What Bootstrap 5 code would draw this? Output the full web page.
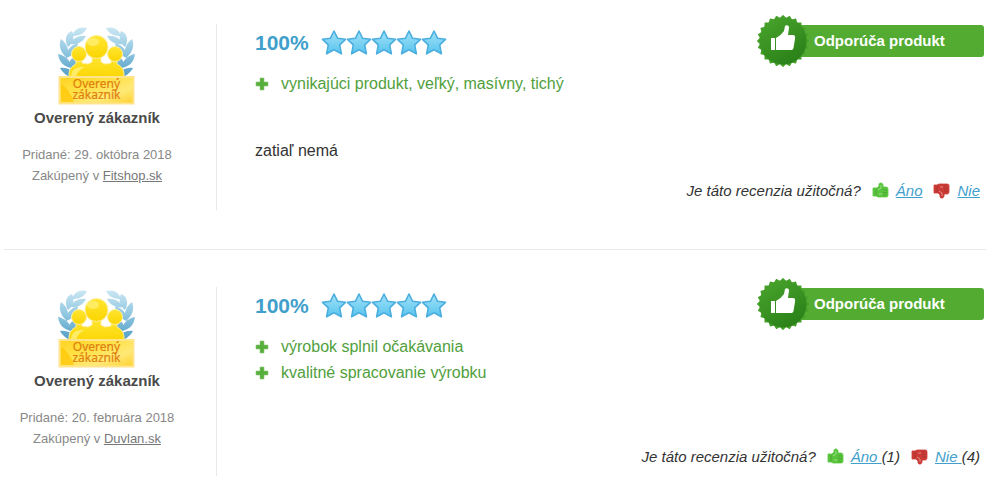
<!DOCTYPE html>
<html lang="sk">
<head>
<meta charset="utf-8">
<meta name="viewport" content="width=device-width, initial-scale=1">
<title>Recenzie</title>
<link href="https://cdn.jsdelivr.net/npm/bootstrap@5.3.0/dist/css/bootstrap.min.css" rel="stylesheet">
<style>
body { font-family: "Liberation Sans", Arial, sans-serif; font-size: 16px; line-height: 26px; color: #333; background: #fff; }
.reviews { padding: 24px 9px 0 4px; }
.review { padding-bottom: 39px; }
.review + .review { border-top: 1px solid #e9e9e9; padding-top: 37px; padding-bottom: 0; }
.author { width: 213px; min-height: 186px; padding-right: 26px; border-right: 1px solid #e9e9e9; line-height: 21px; }
.review + .review .author { min-height: 189px; }
.medal { width: 80px; height: 83px; }
.author-name { font-size: 15px; color: #4a4a4a; }
.meta { font-size: 13px; color: #888; }
.meta a { color: #777; }
.opinion { padding: 0 0 9px 38px; }
.score { height: 37px; color: #419fcb; font-size: 21px; gap: 12px; }
.stars { width: 127px; height: 28px; }
.pros { color: #519f3d; margin-top: 10px; }
.pros svg { width: 14px; height: 14px; }
.votes { font-size: 15px; line-height: 21px; padding-right: 6px; white-space: pre; }
.votes a { color: #419fcb; }
.votes svg { width: 17px; height: 17px; margin: 0 7px 0 11px; }
.votes .up { color: #59c53c; }
.votes .down { color: #cc3a35; transform: scaleY(-1); }
.recommend { width: 201px; height: 32px; margin: 1px 2px 0 0; border-radius: 3px; background: #53ac31; color: #fff; font-size: 15px; }
.seal { width: 54px; height: 54px; margin-left: -27px; }
</style>
<script src="https://cdn.jsdelivr.net/npm/bootstrap@5.3.0/dist/js/bootstrap.bundle.min.js"></script>
</head>
<body>
<svg width="0" height="0" class="position-absolute" aria-hidden="true">
  <defs>
    <linearGradient id="gold" x2="0" y2="1"><stop stop-color="#ffe633"/><stop offset="1" stop-color="#fbd500"/></linearGradient>
    <linearGradient id="plate" x2="1" y2="1"><stop stop-color="#ffd21f"/><stop offset=".35" stop-color="#ffe043"/><stop offset=".7" stop-color="#ffe976"/><stop offset="1" stop-color="#ffcf2c"/></linearGradient>
    <linearGradient id="leaf" gradientUnits="userSpaceOnUse" x1="0" y1="2" x2="0" y2="50"><stop stop-color="#c9e6f2"/><stop offset=".5" stop-color="#8fc6e0"/><stop offset="1" stop-color="#559fc6"/></linearGradient>
    <linearGradient id="sky" x2="0" y2="1"><stop stop-color="#a3e2f8"/><stop offset="1" stop-color="#58c4ee"/></linearGradient>
    <linearGradient id="sealFill" x2=".6" y2="1"><stop stop-color="#4aa52d"/><stop offset="1" stop-color="#2b8219"/></linearGradient>
    <g id="laurel" fill="url(#leaf)">
      <path d="M29 2C22 0 16 3 14 10C21 10 26 8 29 2Z"/>
      <path d="M28 10C21 9 15 12 12 18C19 19 25 16 28 10Z"/>
      <path d="M14 5C8 7 6 14 10 21C15 17 17 11 14 5Z"/>
      <path d="M3 13C0 20 3 27 9 32C12 25 9 17 3 13Z"/>
      <path d="M20 17C13 19 8 24 8 32C15 30 19 24 20 17Z"/>
      <path d="M0 28C1 36 6 41 14 42C13 35 7 29 0 28Z"/>
      <path d="M2 42C6 49 12 52 19 51C16 45 10 41 2 42Z"/>
      <path d="M17 31C11 33 10 38 13 43C18 40 20 36 17 31Z"/>
    </g>
    <symbol id="medal" viewBox="0 0 80 83">
      <use href="#laurel" transform="translate(1 2)"/>
      <use href="#laurel" transform="translate(78 2) scale(-1 1)"/>
      <g fill="url(#gold)" stroke="#fff0a0" stroke-width="1">
        <path d="M12 56V51C12 45 15 42 19 40V34H25V39L31 40L35 38V31H44V38L48 40L54 39V34H60V40C64 42 67 45 67 51V56Z"/>
        <circle cx="22" cy="30" r="7.500"/><circle cx="58" cy="30" r="7.500"/>
        <circle cx="39.500" cy="23" r="11.500"/>
      </g>
      <ellipse cx="36" cy="18" rx="6" ry="4" fill="#fff38a" opacity=".6"/>
      <path d="M14 52C15 44 20 43 28 43C23 45 20 49 19 53Z" fill="#fff38a" opacity=".7"/>
      <path d="M2.500 53H76.500V79.500H2.500Z" fill="url(#plate)" stroke="#ffe48b" stroke-width="2"/>
      <path d="M4 60C9 63 14 69 17 78H4Z" fill="#ffc400" opacity=".7"/>
      <g font-family="Noto Sans, sans-serif" font-size="12" font-weight="400" fill="#e0800f" stroke="#e0800f" stroke-width=".2" text-anchor="middle">
        <text x="39.500" y="64">Overený</text><text x="39.500" y="75">zákazník</text>
      </g>
    </symbol>
    <path id="star" d="M13 2L16.600 9.300L24.500 10.300L18.700 15.900L20.400 24.800L13 20.800L5.600 24.800L7.300 15.900L1.500 10.300L9.400 9.300Z" fill="url(#sky)" stroke="#4aaedf" stroke-width="1.600" stroke-linejoin="round"/>
    <symbol id="stars" viewBox="0 0 127 28">
      <use href="#star"/><use href="#star" x="25"/><use href="#star" x="50"/><use href="#star" x="75"/><use href="#star" x="100"/>
    </symbol>
    <symbol id="plus" viewBox="0 0 14 14"><path d="M5 1H9V5H13V9H9V13H5V9H1V5H5Z" fill="#58ae3d" stroke="#8aca76" stroke-width=".6"/></symbol>
    <rect id="cog" x="-18.500" y="-18.500" width="37" height="37" rx=".6"/>
    <symbol id="seal" viewBox="0 0 54 54">
      <g transform="translate(27 27)" fill="#45a02a">
        <use href="#cog"/><use href="#cog" transform="rotate(15)"/><use href="#cog" transform="rotate(30)"/><use href="#cog" transform="rotate(45)"/><use href="#cog" transform="rotate(60)"/><use href="#cog" transform="rotate(75)"/>
      </g>
      <circle cx="27" cy="27" r="23.500" fill="url(#sealFill)"/>
      <path d="M15 24H19V36H15ZM20 24L24.500 21L28 17L29 12C30 10.500 33 11 33 13.500L32 21H37C39 21 39.500 23 39 25L37.500 34C37 35.500 36.500 36 35 36H20Z" fill="#fff"/>
    </symbol>
    <symbol id="thumb" viewBox="0 0 17 17">
      <path d="M1 6H5L7 4V2C8 0 11 1 11 3V5H14C16 5 16 7 16 8V13C16 15 15 15 13 15H6L4 14H1Z" fill="currentColor" stroke="currentColor" stroke-width=".8"/>
      <path d="M4 7V13M11 8H15M11 10.500H15M11 13H14" stroke="#222" stroke-opacity=".2" fill="none"/>
      <path d="M6 8L9 6V3M7 12H10" stroke="#fff" stroke-opacity=".4" fill="none"/>
    </symbol>
  </defs>
</svg>
<main class="reviews">
  <article class="review d-flex">
    <div class="author flex-shrink-0 text-center">
      <svg class="medal d-block mx-auto" role="img" aria-label="Overený zákazník"><use href="#medal"/></svg>
      <div class="author-name fw-bold">Overený zákazník</div>
      <div class="meta mt-3">Pridané: 29. októbra 2018<br>Zakúpený v <a href="#">Fitshop.sk</a></div>
    </div>
    <div class="opinion flex-grow-1 d-flex flex-column">
      <div class="d-flex justify-content-between">
        <div>
          <div class="score d-flex align-items-center fw-bold"><span>100%</span><svg class="stars" role="img" aria-label="5 hviezdičiek"><use href="#stars"/></svg></div>
          <ul class="pros list-unstyled mb-0">
            <li class="d-flex align-items-center"><svg class="me-2" aria-hidden="true"><use href="#plus"/></svg><span class="ps-1">vynikajúci produkt, veľký, masívny, tichý</span></li>
          </ul>
        </div>
        <div class="recommend d-flex align-items-center fw-bold flex-shrink-0"><svg class="seal flex-shrink-0 me-1" aria-hidden="true"><use href="#seal"/></svg><span>Odporúča produkt</span></div>
      </div>
      <p class="mt-auto mb-3">zatiaľ nemá</p>
      <div class="votes d-flex justify-content-end align-items-center fst-italic">
        <span>Je táto recenzia užitočná?</span>
        <svg class="up" aria-hidden="true"><use href="#thumb"/></svg><a href="#">Áno</a>
        <svg class="down" aria-hidden="true"><use href="#thumb"/></svg><a href="#">Nie</a>
      </div>
    </div>
  </article>
  <article class="review d-flex">
    <div class="author flex-shrink-0 text-center">
      <svg class="medal d-block mx-auto" role="img" aria-label="Overený zákazník"><use href="#medal"/></svg>
      <div class="author-name fw-bold">Overený zákazník</div>
      <div class="meta mt-3">Pridané: 20. februára 2018<br>Zakúpený v <a href="#">Duvlan.sk</a></div>
    </div>
    <div class="opinion flex-grow-1 d-flex flex-column">
      <div class="d-flex justify-content-between">
        <div>
          <div class="score d-flex align-items-center fw-bold"><span>100%</span><svg class="stars" role="img" aria-label="5 hviezdičiek"><use href="#stars"/></svg></div>
          <ul class="pros list-unstyled mb-0">
            <li class="d-flex align-items-center"><svg class="me-2" aria-hidden="true"><use href="#plus"/></svg><span class="ps-1">výrobok splnil očakávania</span></li>
            <li class="d-flex align-items-center"><svg class="me-2" aria-hidden="true"><use href="#plus"/></svg><span class="ps-1">kvalitné spracovanie výrobku</span></li>
          </ul>
        </div>
        <div class="recommend d-flex align-items-center fw-bold flex-shrink-0"><svg class="seal flex-shrink-0 me-1" aria-hidden="true"><use href="#seal"/></svg><span>Odporúča produkt</span></div>
      </div>
      <div class="votes d-flex justify-content-end align-items-center fst-italic mt-auto">
        <span>Je táto recenzia užitočná?</span>
        <svg class="up" aria-hidden="true"><use href="#thumb"/></svg><a href="#">Áno </a><span>(1)</span>
        <svg class="down" aria-hidden="true"><use href="#thumb"/></svg><a href="#">Nie </a><span>(4)</span>
      </div>
    </div>
  </article>
</main>
</body>
</html>
